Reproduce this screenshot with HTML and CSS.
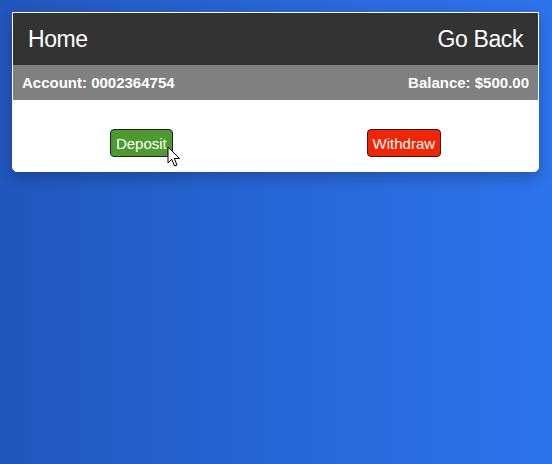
FILE: index.html
```html
<!DOCTYPE html>
<html>
<head>
<meta charset="utf-8">
<link rel="stylesheet" href="styles.css">
</head>
<body>
<div class="page">
  <div class="card">
    <div class="header">
      <span class="title">Home</span>
      <span class="title">Go Back</span>
    </div>
    <div class="info">
      <span>Account: 0002364754</span>
      <span>Balance: $500.00</span>
    </div>
    <div class="actions">
      <button class="btn deposit">Deposit</button>
      <button class="btn withdraw">Withdraw</button>
    </div>
  </div>
  <svg class="cursor" width="14" height="22" viewBox="0 0 14 22">
    <path d="M1 1 L1 17 L4.8 13.4 L7.6 20 L10 19 L7.3 12.5 L12.5 12.5 Z" fill="#fff" stroke="#000" stroke-width="1" stroke-linejoin="round"/>
  </svg>
</div>
</body>
</html>
```

FILE: styles.css
```css
html, body {
  margin: 0;
  padding: 0;
  height: 100%;
}
body {
  background: linear-gradient(90deg, #2156bb 0%, #2766d6 50%, #2d73ea 100%);
  font-family: "Liberation Sans", Arial, sans-serif;
}
.page {
  position: relative;
  padding: 12px 13px 0 12px;
}
.card {
  background: #fff;
  border: 1px solid #fff;
  border-radius: 0 0 5px 5px;
  box-shadow: 0 6px 14px rgba(0, 0, 0, 0.22);
}
.header {
  background: #333333;
  height: 52px;
  display: flex;
  justify-content: space-between;
  align-items: center;
  padding: 0 15px;
  color: #fff;
}
.title {
  font-size: 23px;
  letter-spacing: -0.4px;
}
.info {
  background: #808080;
  height: 35px;
  display: flex;
  justify-content: space-between;
  align-items: center;
  padding: 0 9px 0 9px;
  color: #fff;
  font-weight: bold;
  font-size: 15px;
}
.actions {
  box-sizing: border-box;
  height: 71px;
  padding-top: 29px;
  display: flex;
  justify-content: space-around;
  align-items: flex-start;
}
.btn {
  font-family: "Liberation Sans", Arial, sans-serif;
  font-size: 15px;
  color: #fff;
  border: 1px solid #222;
  border-radius: 4px;
  height: 28px;
  padding: 0 5px;
  margin: 0;
}
.deposit {
  background: #4d9a2f;
}
.withdraw {
  background: #f42400;
}
.cursor {
  position: absolute;
  left: 167px;
  top: 146px;
}
```
